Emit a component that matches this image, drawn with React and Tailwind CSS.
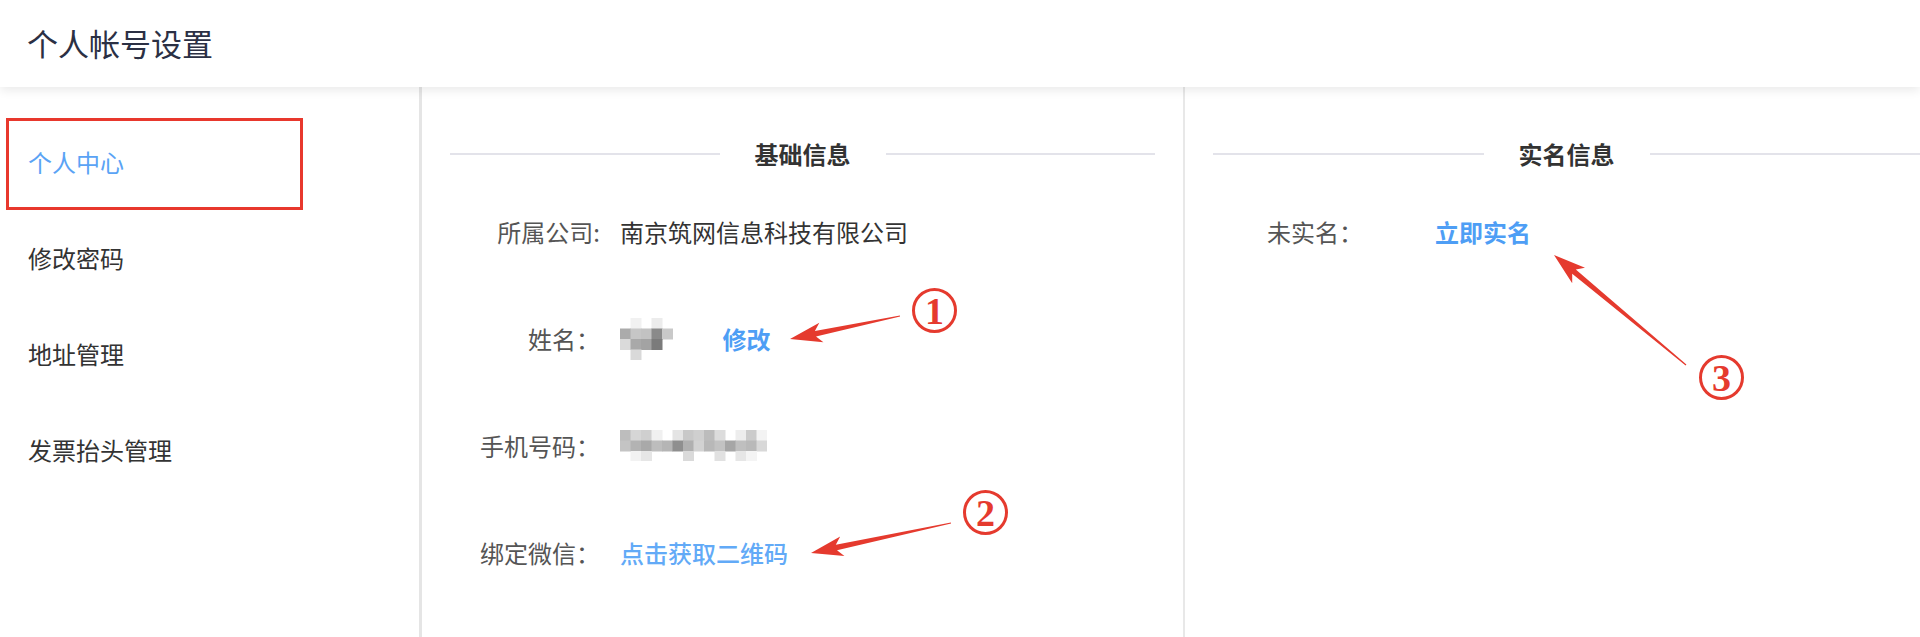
import React from 'react'

const RED = '#e53a2e'

const menu = [
  { label: '个人中心', active: true },
  { label: '修改密码' },
  { label: '地址管理' },
  { label: '发票抬头管理' },
]

// blurred values, gray levels per cell ('' = empty)
const NAME_CELLS = [
  ['', '#f1f1f1', '', '#ececec', ''],
  ['#ababab', '#c6c6c6', '#c2c2c2', '#8a8a8a', '#c9c9c9'],
  ['#dadada', '#a9a9a9', '#a3a3a3', '#7b7b7b', ''],
  ['', '#d9d9d9', '', '', ''],
]

const PHONE_CELLS = [
  ['#bdbdbd', '#d6d6d6', '#cfcfcf', '#f0f0f0', '', '#e4e4e4', '#c8c8c8', '#cfcfcf', '#bcbcbc', '#dcdcdc', '', '#ededed', '#cbcbcb', '#f3f3f3'],
  ['#c4c4c4', '#b3b3b3', '#a9a9a9', '#bdbdbd', '#b5b5b5', '#8f8f8f', '#b0b0b0', '#d2d2d2', '#b8b8b8', '#c2c2c2', '#a6a6a6', '#bfbfbf', '#b9b9b9', '#d8d8d8'],
  ['', '#f2f2f2', '#e6e6e6', '', '', '', '#dadada', '', '', '#e1e1e1', '', '#e6e6e6', '#f4f4f4', ''],
]

function Mosaic({ cells, size = 10.5 }) {
  const w = cells[0].length * size
  const h = cells.length * size
  return (
    <svg width={w} height={h} className="block">
      {cells.map((row, r) =>
        row.map((c, i) =>
          c ? <rect key={r + '-' + i} x={i * size} y={r * size} width={size + 0.5} height={size + 0.5} fill={c} /> : null
        )
      )}
    </svg>
  )
}

function SectionTitle({ children }) {
  return (
    <div className="flex items-center h-[24px]">
      <div className="flex-1 h-[2px] bg-[#e3e3ea]" />
      <div className="mx-[35px] text-[24px] leading-[24px] font-bold text-[#333]">{children}</div>
      <div className="flex-1 h-[2px] bg-[#e3e3ea]" />
    </div>
  )
}

function Row({ label, children }) {
  return (
    <div className="flex items-center h-[107px]">
      <div className="w-[150px] shrink-0 text-right text-[24px] text-[#555]">{label}</div>
      <div className="ml-[20px] flex items-center text-[24px] text-[#333]">{children}</div>
    </div>
  )
}

function arrow(tx, ty, px, py) {
  const len = Math.hypot(px - tx, py - ty)
  const dx = (px - tx) / len
  const dy = (py - ty) / len
  const nx = -dy
  const ny = dx
  const head = 26
  const hx = px - dx * head
  const hy = py - dy * head
  const bx = px - dx * (head + 6)
  const by = py - dy * (head + 6)
  const pts = [
    [tx + nx * 0.6, ty + ny * 0.6],
    [hx + nx * 2.8, hy + ny * 2.8],
    [bx + nx * 10, by + ny * 10],
    [px, py],
    [bx - nx * 10, by - ny * 10],
    [hx - nx * 2.8, hy - ny * 2.8],
    [tx - nx * 0.6, ty - ny * 0.6],
  ]
  return pts.map(p => p[0].toFixed(1) + ',' + p[1].toFixed(1)).join(' ')
}

export default function App() {
  return (
    <div
      className="relative w-[1920px] h-[637px] overflow-hidden bg-white"
      style={{ fontFamily: '"Noto Sans CJK SC", "Noto Sans", sans-serif' }}
    >
      {/* Header */}
      <div className="relative z-10 h-[87px] flex items-center pl-[27px] bg-white shadow-[0_3px_10px_rgba(0,0,0,0.09)]">
        <h1 className="text-[31px] text-[#2b3044]">个人帐号设置</h1>
      </div>

      <div className="flex h-[550px]">
        {/* Sidebar */}
        <div className="w-[422px] shrink-0 border-r-[3px] border-[#e5e5e5] pt-[27px]">
          {menu.map(item => (
            <div
              key={item.label}
              className={`h-[96px] flex items-center pl-[28px] text-[24px] ${
                item.active ? 'text-[#5aa3f5]' : 'text-[#333]'
              }`}
            >
              {item.label}
            </div>
          ))}
        </div>

        {/* 基础信息 */}
        <div className="w-[763px] shrink-0 border-r-[2px] border-[#e8e8e8] px-[28px] pt-[55px]">
          <SectionTitle>基础信息</SectionTitle>
          <div className="mt-[12px]">
            <Row label="所属公司:">南京筑网信息科技有限公司</Row>
            <Row label="姓名：">
              <Mosaic cells={NAME_CELLS} />
              <span className="ml-[50px] font-bold text-[#4e9ef5]">修改</span>
            </Row>
            <Row label="手机号码：">
              <Mosaic cells={PHONE_CELLS} />
            </Row>
            <Row label="绑定微信：">
              <span className="font-medium text-[#62aaf7]">点击获取二维码</span>
            </Row>
          </div>
        </div>

        {/* 实名信息 */}
        <div className="w-[763px] shrink-0 px-[28px] pt-[55px]">
          <SectionTitle>实名信息</SectionTitle>
          <div className="mt-[12px]">
            <Row label="未实名：">
              <span className="ml-[52px] font-bold text-[#4e9ef5]">立即实名</span>
            </Row>
          </div>
        </div>
      </div>

      {/* Annotations */}
      <div className="absolute left-[6px] top-[118px] w-[297px] h-[92px] border-[3px] border-[#e8382d]" />

      <svg className="absolute left-0 top-0 pointer-events-none" width="1920" height="637">
        <polygon points={arrow(900, 316, 790, 339)} fill={RED} />
        <polygon points={arrow(951, 523, 811, 553)} fill={RED} />
        <polygon points={arrow(1686, 365, 1554, 255)} fill={RED} />
      </svg>

      {[
        { n: '1', pos: 'left-[912px] top-[288px]' },
        { n: '2', pos: 'left-[963px] top-[490px]' },
        { n: '3', pos: 'left-[1699px] top-[355px]' },
      ].map(c => (
        <div
          key={c.n}
          className={`absolute ${c.pos} w-[45px] h-[45px] rounded-full border-[3px] border-[#e53a2e] flex items-center justify-center text-[38px] font-bold text-[#e53a2e] leading-none`}
          style={{ fontFamily: '"Liberation Serif", serif' }}
        >
          {c.n}
        </div>
      ))}
    </div>
  )
}
